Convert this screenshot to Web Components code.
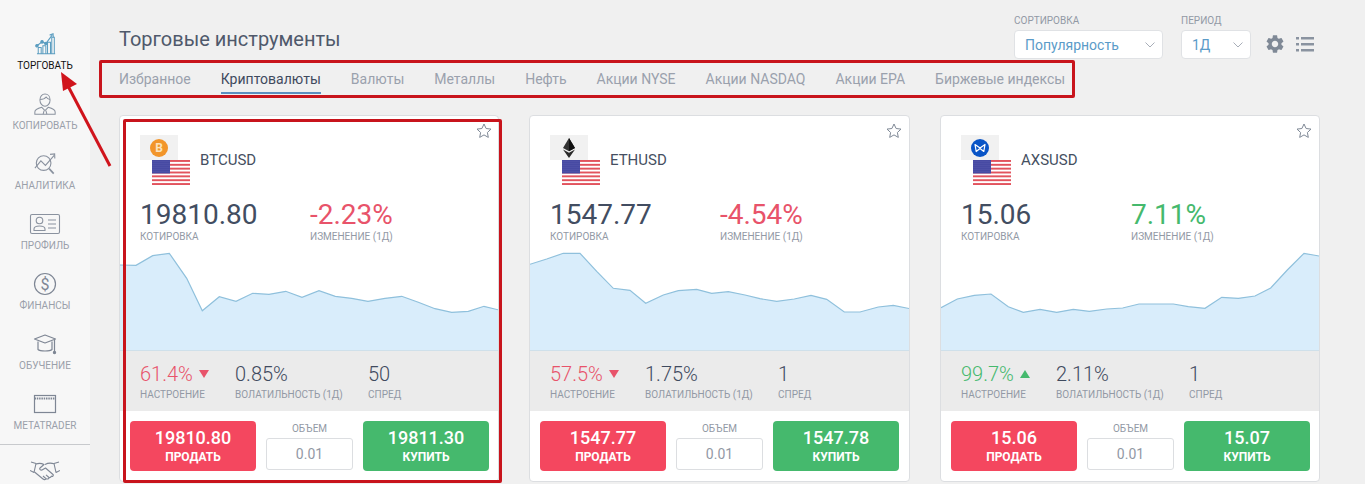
<!DOCTYPE html>
<html lang="ru"><head><meta charset="utf-8"><title>Торговые инструменты</title>
<style>
html,body{margin:0;padding:0;height:484px;overflow:hidden;background:#f0f0f0;font-family:Roboto,"Liberation Sans",sans-serif}
</style></head><body>
<trade-app>
  <side-nav slot="nav">
    <nav-item icon="trade" active>ТОРГОВАТЬ</nav-item>
    <nav-item icon="copy">КОПИРОВАТЬ</nav-item>
    <nav-item icon="analytics">АНАЛИТИКА</nav-item>
    <nav-item icon="profile">ПРОФИЛЬ</nav-item>
    <nav-item icon="finance">ФИНАНСЫ</nav-item>
    <nav-item icon="edu">ОБУЧЕНИЕ</nav-item>
    <nav-item icon="window">METATRADER</nav-item>
    <nav-item icon="hands" divided></nav-item>
  </side-nav>
  <top-bar slot="top" heading="Торговые инструменты"></top-bar>
  <tab-strip slot="top" items="Избранное|Криптовалюты|Валюты|Металлы|Нефть|Акции NYSE|Акции NASDAQ|Акции EPA|Биржевые индексы" current="1"></tab-strip>
  <card-grid slot="top">
    <instrument-card coin="btc" symbol="BTCUSD" quote="19810.80" change="-2.23%" dir="down" mood="61.4%" vol="0.85%" spread="50" sell="19810.80" buy="19811.30" x0="120" star="356"
      points="120,265 136,265.3 152.7,255.7 169.3,253.3 186.7,278.3 202.3,310.7 219.3,296.7 236,301.3 252.7,293.3 269,294.3 285.7,291.3 302,297.3 319,290.7 335.3,296.3 351.7,298.3 368,301.3 385,298.3 401.7,296.3 418.3,302.3 435,308.7 451.7,312.3 468.3,311.3 484,306.3 499,310"></instrument-card>
    <instrument-card coin="eth" symbol="ETHUSD" quote="1547.77" change="-4.54%" dir="down" mood="57.5%" vol="1.75%" spread="1" sell="1547.77" buy="1547.78" x0="530" star="356"
      points="530,264.3 546.7,259 563.3,253.3 580,253.3 596.7,271.3 613.3,288.3 630,290.3 645.7,303.3 663.3,295 678.3,290.7 696.7,289.3 711.7,293.3 728.3,291.7 745,295 760,298.7 776.7,301.3 794.3,299 811,295.3 826.7,299.3 844.3,312 860,312 878.3,307 893.3,305.3 910,308.7"></instrument-card>
    <instrument-card coin="axs" symbol="AXSUSD" quote="15.06" change="7.11%" dir="up" mood="99.7%" vol="2.11%" spread="1" sell="15.06" buy="15.07" x0="941" star="355"
      points="941,307.7 957.3,299 974.3,295.3 991,294 1008.3,306.7 1023.3,312.3 1040,309.3 1056.7,312.3 1073.3,309.3 1089.3,311.3 1106.7,309 1122.7,308 1139,304 1173.3,304 1188.3,306.7 1205,308.3 1221.7,297.3 1238.3,298.3 1255,296 1270.7,288 1287.3,270 1304,253.3 1319,256"></instrument-card>
  </card-grid>
  <mark-up slot="over"></mark-up>
</trade-app>
<script>
const ICONS={
trade:`<svg width="22" height="22" viewBox="0 0 26 26" fill="none" stroke="#5b9dc0" stroke-width="1.200"><path d="M5 24V17h3.500v7M10.500 24V15h3.500v9M16 24V11h3.500v13M21 24V5h3v19M3.500 24.500h21.500"/><path d="M3.500 15l6-4.500 4.500 2 7.500-10" stroke-width="1.400"/><path d="M18.500 2.500l4-1.500.3 4.200" stroke-width="1.300"/><circle cx="3.500" cy="15" r="1.500" fill="#5b9dc0"/><circle cx="9.500" cy="10.500" r="1.500" fill="#5b9dc0"/><circle cx="14" cy="12.500" r="1.500" fill="#5b9dc0"/></svg>`,
copy:`<svg width="24" height="23" viewBox="0 0 26 24.900" fill="none" stroke="#8a929f" stroke-width="1.100"><path d="M7.500 7.500c0-4 2.500-6.300 5.500-6.300s5.500 2.300 5.500 6.300c0 3.700-2.500 6.800-5.500 6.800s-5.500-3.100-5.500-6.800z"/><path d="M7.700 7c2.500 0 5-.6 6.500-2.600 1 1.500 2.500 2.400 4.100 2.600"/><path d="M2 23v-2.500c0-2.300 2.500-3.700 7.500-5l3.500 3.500 3.500-3.500c5 1.300 7.500 2.700 7.500 5V23z"/><path d="M12 19l-1 4M14 19l1 4"/></svg>`,
analytics:`<svg width="24" height="22" viewBox="0 0 26 24" fill="none" stroke="#8a929f" stroke-width="1.200"><circle cx="11.500" cy="11" r="8"/><path d="M17.500 17l5 5.500" stroke-width="1.800"/><path d="M2 16.500l6.500-8 5 5 9.500-11"/><path d="M18.500 1.500l5-.5.200 5"/></svg>`,
profile:`<svg width="32" height="22" viewBox="0 0 32 22" fill="none" stroke="#8a929f" stroke-width="1.100"><rect x="1.500" y="1.500" width="29" height="19" rx="1.500"/><circle cx="10.500" cy="7.500" r="3.300"/><path d="M5 17.500v-1.500c0-1.800 2.500-3 5.500-3s5.500 1.200 5.500 3v1.500z"/><path d="M19 7h8M19 11h8M19 15h8"/></svg>`,
finance:`<svg width="24" height="24" viewBox="0 0 24 24" fill="none" stroke="#7e8694" stroke-width="1.200"><circle cx="12" cy="12" r="10.500"/><text x="12" y="17.500" text-anchor="middle" font-family="Roboto,sans-serif" font-size="16" fill="#7e8694" stroke="none">$</text></svg>`,
edu:`<svg width="24" height="24" viewBox="0 0 24 24" fill="none" stroke="#7e8694" stroke-width="1.200"><path d="M1.500 7L12 3l10.500 4L12 11z" stroke-linejoin="round"/><path d="M5 9.500v8c2 2 12 2 14 0v-8"/><path d="M21.500 7.500V19"/><circle cx="21.500" cy="20.500" r="1.100" fill="#7e8694"/></svg>`,
window:`<svg width="24" height="20" viewBox="0 0 24 20" fill="none" stroke="#7e8694" stroke-width="1.200"><rect x="1.500" y="1.500" width="21" height="17"/><path d="M1.500 4.500h21" stroke-dasharray="1.500 .8" stroke-width="2"/></svg>`,
hands:`<svg width="30" height="22" viewBox="0 0 30 22" fill="none" stroke="#7e8694" stroke-width="1.100" stroke-linejoin="round"><path d="M1 3l5 1.500-2 9-4-2M29 3l-5 1.500 2 9 4-2"/><path d="M6 5c3-1 5-1 8 .5l-4 3.500c-1 1 .5 2.500 2 2l3.500-2 7.500 6.500c1 1-.5 2.500-1.800 1.500M24 4.800c-3-1-5-1.300-9 .6"/><path d="M4.500 13l8.500 7c1.200 1 2.600.7 3-.3l1 .3c1 .3 2-.5 2-1.500 1 .3 2.400-.4 2.200-1.700"/><path d="M16 19.700l-3-2.700M19 18.500l-3-2.700"/></svg>`
};

function make(el,css,html){const r=el.attachShadow({mode:'open'});r.innerHTML=`<style>${css}</style>${html}`;return r;}

customElements.define('trade-app',class extends HTMLElement{connectedCallback(){ if(this.shadowRoot)return;
 make(this,`:host{display:flex;width:1365px;height:484px;overflow:hidden;position:relative;color:#3f4a5e}
 .nav{display:block;flex:0 0 90px}.main{flex:1;min-width:0;padding-left:29px}`,
 `<div class="nav"><slot name="nav"></slot></div><div class="main"><slot name="top"></slot></div><slot name="over"></slot>`);}});

customElements.define('side-nav',class extends HTMLElement{connectedCallback(){ if(this.shadowRoot)return;
 make(this,`:host{display:flex;flex-direction:column;width:90px;height:484px;background:#f7f7f7;padding-top:14px;box-sizing:border-box;overflow:hidden}`,`<slot></slot>`);}});

customElements.define('nav-item',class extends HTMLElement{connectedCallback(){ if(this.shadowRoot)return;
 const div=this.hasAttribute('divided');
 make(this,`:host{display:flex;flex:0 0 60px;flex-direction:column;align-items:center;box-sizing:border-box;font:400 10px/12px Roboto,sans-serif;color:#9aa0aa}
 :host([active]){color:#111}
 :host([divided]){border-top:1px solid #c8cacd;margin-top:10px;padding-top:12px}
 .i{height:${div?'26px':'30px'};display:flex;align-items:center;justify-content:center;margin-top:${div?'0':'15px'}}
 .t{white-space:nowrap;margin-top:1px}`,
 `<div class="i">${ICONS[this.getAttribute('icon')]}</div><div class="t"><slot></slot></div>`);}});

customElements.define('select-box',class extends HTMLElement{connectedCallback(){ if(this.shadowRoot)return;
 make(this,`:host{display:block;width:${this.getAttribute('w')}px;font-family:Roboto,sans-serif}
 .l{font-size:10px;line-height:12px;color:#9299a5;margin-bottom:3px;padding-top:1px}
 .b{height:29px;box-sizing:border-box;background:#fff;border:1px solid #e0e2e5;border-radius:4px;display:flex;align-items:center;justify-content:space-between;padding:0 6px 0 10px;font-size:14px;color:#5b9bc8}
 svg{display:block;margin-right:1px}`,
 `<div class="l">${this.getAttribute('label')}</div><div class="b"><span>${this.getAttribute('value')}</span><svg width="10" height="6" viewBox="0 0 10 6" fill="none" stroke="#a8aeb8" stroke-width="1"><path d="M.5.500L5 5 9.500.5"/></svg></div>`);}});

customElements.define('top-bar',class extends HTMLElement{connectedCallback(){ if(this.shadowRoot)return;
 make(this,`:host{display:flex;justify-content:space-between;height:65px;padding-right:51px;box-sizing:border-box;font-family:Roboto,sans-serif}
 h1{margin:25px 0 0;font:400 20px/28px Roboto,sans-serif;color:#4f596b}
 .c{display:flex;gap:18px;padding-top:14px;align-items:flex-start}
 .ic{display:flex;gap:12px;margin:21px 0 0 -3px;align-items:center}
 svg{display:block}`,
 `<h1>${this.getAttribute('heading')}</h1><div class="c"><select-box w="149" label="СОРТИРОВКА" value="Популярность"></select-box><select-box w="70" label="ПЕРИОД" value="1Д"></select-box>
 <div class="ic"><svg width="18" height="18" viewBox="2.300 2 19.400 20" fill="#7f8996"><path d="M19.140 12.940c.04-.3.06-.61.06-.94 0-.32-.02-.64-.07-.94l2.030-1.580c.18-.14.23-.41.12-.61l-1.920-3.320c-.12-.22-.37-.29-.59-.22l-2.390.96c-.5-.38-1.030-.7-1.620-.94l-.36-2.540c-.04-.24-.24-.41-.48-.41h-3.840c-.24 0-.43.17-.47.41l-.36 2.540c-.59.24-1.130.57-1.620.94l-2.390-.96c-.22-.08-.47 0-.59.22L2.740 8.870c-.12.21-.08.47.12.61l2.030 1.580c-.05.3-.09.63-.09.94s.02.64.07.94l-2.030 1.580c-.18.14-.23.41-.12.61l1.920 3.320c.12.22.37.29.59.22l2.390-.96c.5.38 1.030.7 1.620.94l.36 2.540c.05.24.24.41.48.41h3.840c.24 0 .44-.17.47-.41l.36-2.540c.59-.24 1.130-.56 1.620-.94l2.390.96c.22.08.47 0 .59-.22l1.920-3.320c.12-.22.07-.47-.12-.61l-2.010-1.580zM12 15.600c-1.980 0-3.600-1.620-3.600-3.600s1.620-3.600 3.600-3.600 3.600 1.620 3.600 3.600-1.620 3.600-3.600 3.600z"/></svg>
 <svg width="18" height="15" viewBox="0 0 18 15" fill="#8a93a0"><rect y="0" width="3" height="2.500"/><rect y="6" width="3" height="2.500"/><rect y="12" width="3" height="2.500"/><rect x="5" y="0" width="13" height="2.500"/><rect x="5" y="6" width="13" height="2.500"/><rect x="5" y="12" width="13" height="2.500"/></svg></div></div>`);}});

customElements.define('tab-strip',class extends HTMLElement{connectedCallback(){ if(this.shadowRoot)return;
 const cur=+this.getAttribute('current');
 const items=this.getAttribute('items').split('|').map((t,i)=>`<div class="t${i===cur?' on':''}">${t}</div>`).join('');
 make(this,`:host{display:flex;gap:30px;height:50px;box-sizing:border-box;font:400 14px/20px Roboto,sans-serif;color:#9aa1ad}
 .t{height:29px;box-sizing:border-box;padding-top:4px;white-space:nowrap}
 .on{color:#3f4a5e;border-bottom:2px solid #5b8fc0}`,items);}});

customElements.define('card-grid',class extends HTMLElement{connectedCallback(){ if(this.shadowRoot)return;
 make(this,`:host{display:grid;grid-template-columns:380px 381px 380px;column-gap:30px}`,`<slot></slot>`);}});

const FLAG=`<svg width="38" height="25" viewBox="0 0 38 25" style="display:block"><defs><pattern id="s" width="2" height="2" patternUnits="userSpaceOnUse"><rect width="2" height="2" fill="#34379a"/><circle cx="1" cy="1" r=".4" fill="#fff"/></pattern></defs><rect width="38" height="25" fill="#fff"/>${Array.from({length:7},(_,i)=>`<rect y="${(i*25/6.5).toFixed(2)}" width="38" height="1.920" fill="#e2535d"/>`).join('')}<rect width="18" height="13.500" fill="url(#s)"/></svg>`;
const COINS={
btc:`<svg width="20" height="20" viewBox="0 0 20 20"><circle cx="10" cy="10" r="9" fill="#f2952a"/><text x="10" y="14.200" text-anchor="middle" font-family="Roboto,sans-serif" font-weight="700" font-size="12" fill="#fbe3bd">B</text></svg>`,
eth:`<svg width="20" height="22" viewBox="0 0 20 22"><path d="M10 1L4 11l6 3.300 6-3.300z" fill="#333"/><path d="M10 1v13.300l6-3.300z" fill="#111"/><path d="M4 12.500L10 21l6-8.500-6 3.300z" fill="#2a2a2a"/></svg>`,
axs:`<svg width="20" height="20" viewBox="0 0 20 20"><circle cx="10" cy="10" r="9" fill="#0a55c7"/><path d="M5 6.500l5 3.500 5-3.500-1.200 7L10 10.500l-3.800 3z" fill="none" stroke="#fff" stroke-width="1.200" stroke-linejoin="round"/></svg>`};

customElements.define('instrument-card',class extends HTMLElement{connectedCallback(){ if(this.shadowRoot)return;
 const a=n=>this.getAttribute(n);
 const x0=+a('x0');
 const pts=a('points').split(' ').map(p=>{const[x,y]=p.split(',').map(Number);return [+(x-x0).toFixed(1),+(y-240).toFixed(1)];});
 const line=pts.map(p=>p.join(',')).join(' ');
 const area=`${pts[0][0]},111 ${line} ${pts[pts.length-1][0]},111`;
 const up=a('dir')==='up';
 const col=up?'#45b96d':'#e8536a';
 make(this,`:host{display:block;position:relative;box-sizing:border-box;height:367px;background:#fff;border:1px solid #dcdee1;border-radius:4px;font-family:Roboto,sans-serif;color:#3f4a5e}
 .star{position:absolute;left:${a('star')}px;top:7px;display:block}
 .h{display:flex;align-items:center;height:50px;padding:19px 0 0 20px}
 .logo{width:60px;height:50px;flex:none}
 .g{width:38px;height:25px;background:#f1f1f1;display:flex;align-items:center;justify-content:center}
 .f{margin-left:12px}
 .sym{font-size:15px;line-height:16px;font-weight:400;color:#454f61}
 .q{display:grid;grid-template-columns:170px 1fr;height:55px;padding:14px 0 0 20px;box-sizing:border-box}
 .big{font:400 28px/32px Roboto,sans-serif;white-space:nowrap;color:#424d61}
 .big.c{color:${col}}
 .lb{font:400 10px/10px Roboto,sans-serif;color:#9299a5;white-space:nowrap}
 .q .lb{margin-top:1px}
 svg.ch{display:block;width:100%;height:111px}
 .st{display:grid;grid-template-columns:95px 133px 1fr;height:60px;box-sizing:border-box;background:#ebebeb;padding:11px 0 0 20px}
 .v{font:300 20px/24px Roboto,sans-serif;white-space:nowrap;display:flex;align-items:center;gap:6px;color:#3f4a5e}
 .v.m{color:${col}}
 .st .lb{margin-top:3px;line-height:12px}
 .tri{width:0;height:0;border-left:5.500px solid transparent;border-right:5.500px solid transparent;${up?`border-bottom:8px solid ${col}`:`border-top:8px solid ${col}`}}
 .ft{display:grid;grid-template-columns:126px 87px 126px;gap:10px;padding:10px;height:70px;box-sizing:border-box}
 .b{height:50px;border-radius:4px;color:#fff;display:flex;flex-direction:column;align-items:center;justify-content:center;text-align:center}
 .b b{font:500 18px/20px Roboto,sans-serif}
 .b span{font:700 12px/14px Roboto,sans-serif;margin-top:2px}
 .sell{background:#f4475f}.buy{background:#45b96d}
 .vol{text-align:center}
 .vol .lb{line-height:14px;padding-top:1px}
 .inp{margin-top:2px;height:32px;box-sizing:border-box;background:#fff;border:1px solid #dcdee1;border-radius:3px;font:400 14px/30px Roboto,sans-serif;color:#9299a5}`,
 `<svg class="star" width="16" height="15" viewBox="0 0 16 15" fill="none" stroke="#7f8996" stroke-width="1"><path d="M8 1l2.100 4.500 4.900.6-3.600 3.400.9 4.900L8 11.900l-4.300 2.500.9-4.900L1 6.100l4.900-.6z" stroke-linejoin="round"/></svg>
 <div class="h"><div class="logo"><div class="g">${COINS[a('coin')]}</div><div class="f">${FLAG}</div></div><div class="sym">${a('symbol')}</div></div>
 <div class="q"><div><div class="big">${a('quote')}</div><div class="lb">КОТИРОВКА</div></div><div><div class="big c">${a('change')}</div><div class="lb">ИЗМЕНЕНИЕ (1Д)</div></div></div>
 <svg class="ch"><polygon points="${area}" fill="#d9edfb"/><polyline points="${line}" fill="none" stroke="#8fc0dc" stroke-width="1.200"/><line x1="0" x2="100%" y1="110.500" y2="110.500" stroke="#cfe0ea"/></svg>
 <div class="st"><div><div class="v m">${a('mood')}<i class="tri"></i></div><div class="lb">НАСТРОЕНИЕ</div></div><div><div class="v">${a('vol')}</div><div class="lb">ВОЛАТИЛЬНОСТЬ (1Д)</div></div><div><div class="v">${a('spread')}</div><div class="lb">СПРЕД</div></div></div>
 <div class="ft"><div class="b sell"><b>${a('sell')}</b><span>ПРОДАТЬ</span></div><div class="vol"><div class="lb">ОБЪЕМ</div><div class="inp">0.01</div></div><div class="b buy"><b>${a('buy')}</b><span>КУПИТЬ</span></div></div>`);}});

customElements.define('mark-up',class extends HTMLElement{connectedCallback(){ if(this.shadowRoot)return;
 make(this,`:host{display:block;position:absolute;inset:0;pointer-events:none}
 .r{position:absolute;box-sizing:border-box;border:3px solid #c8141c;border-radius:2px}
 .a{left:99px;top:60px;width:976px;height:38px}
 .b{left:123px;top:119px;width:379px;height:364px}
 svg{position:absolute;left:0;top:0}`,
 `<div class="r a"></div><div class="r b"></div><svg width="130" height="180" viewBox="0 0 130 180"><path d="M110 166L68 86" stroke="#d0141c" stroke-width="3" fill="none"/><path d="M61 72L77 84 63 91z" fill="#d0141c"/></svg>`);}});
</script>
</body></html>
